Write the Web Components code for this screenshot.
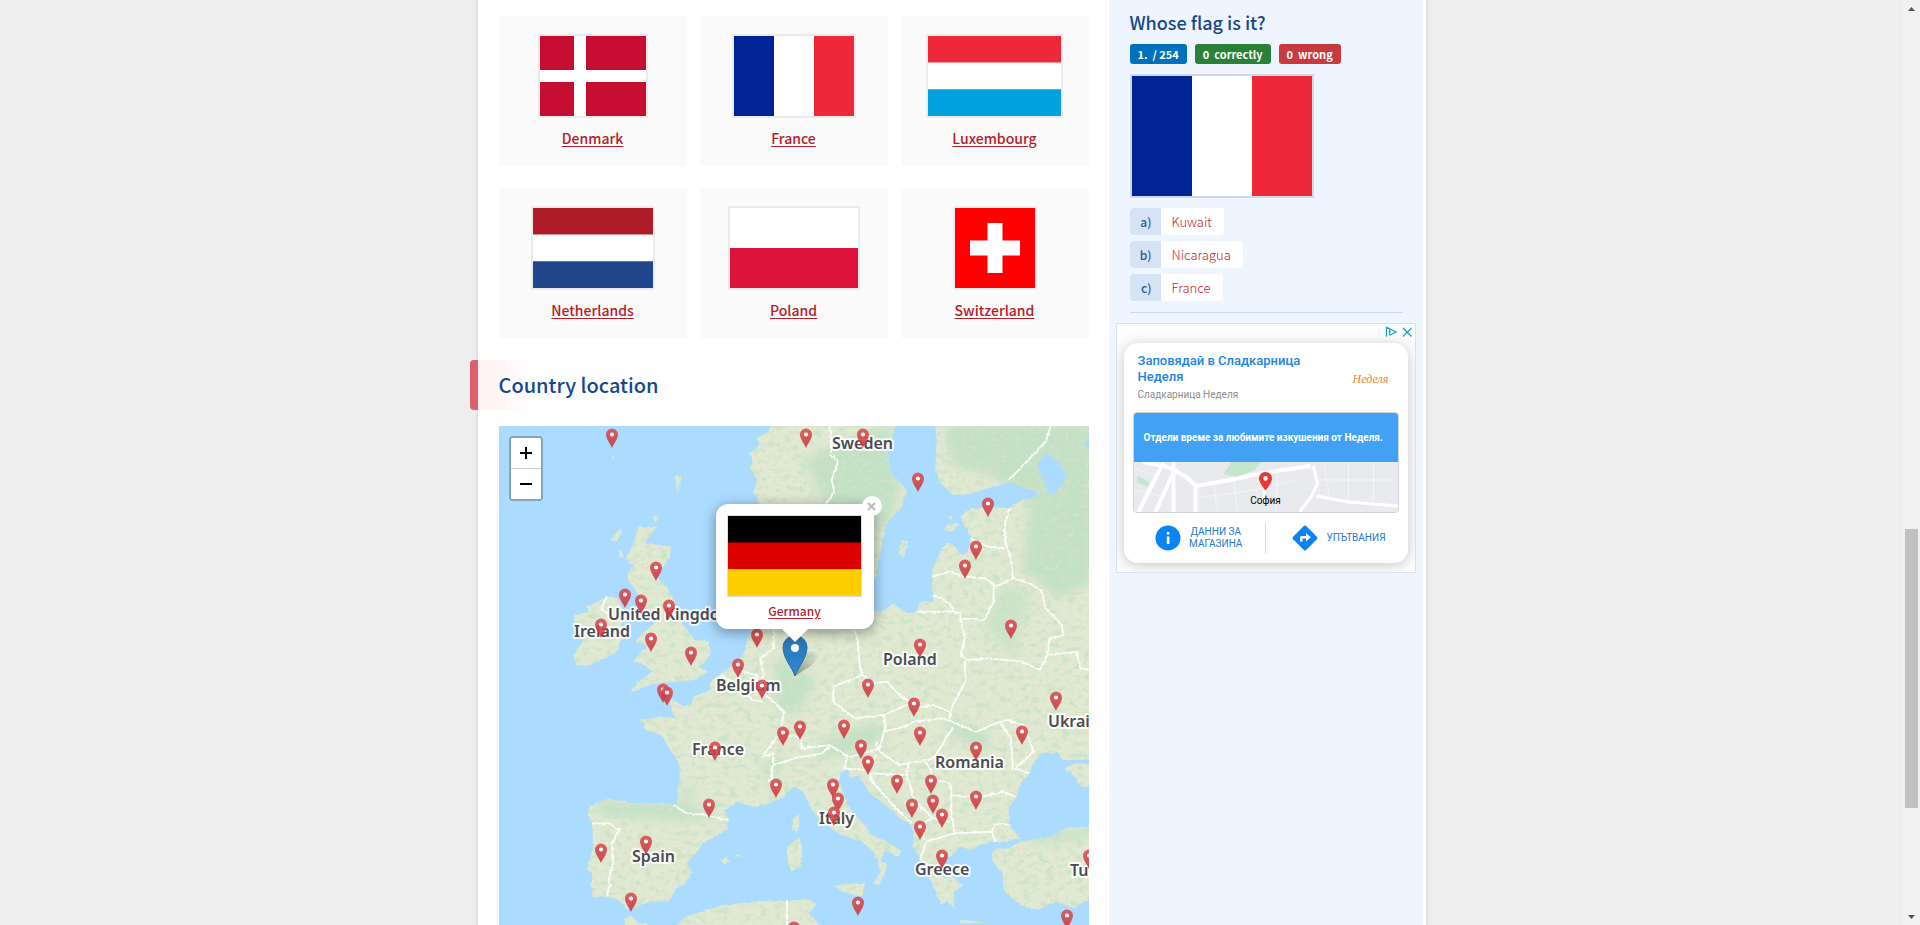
<!DOCTYPE html>
<html lang="en">
<head>
<meta charset="utf-8">
<meta name="viewport" content="width=device-width, initial-scale=1">
<title>Germany - Country location</title>
<style>
html,body{margin:0;height:100%}
body{background:#eee;font-family:"Noto Sans CJK SC","Open Sans",sans-serif;color:#15488a;overflow:hidden}
</style>
</head>
<body>
<site-page>
  <flag-grid>
    <flag-card country="denmark" label="Denmark"></flag-card>
    <flag-card country="france" label="France"></flag-card>
    <flag-card country="luxembourg" label="Luxembourg"></flag-card>
    <flag-card country="netherlands" label="Netherlands"></flag-card>
    <flag-card country="poland" label="Poland"></flag-card>
    <flag-card country="switzerland" label="Switzerland"></flag-card>
  </flag-grid>
  <section-heading>Country location</section-heading>
  <country-map></country-map>
  <flag-quiz slot="aside">
    <score-badge slot="score" tone="blue">1.&nbsp; / 254</score-badge>
    <score-badge slot="score" tone="green">0&nbsp; correctly</score-badge>
    <score-badge slot="score" tone="red">0&nbsp; wrong</score-badge>
    <answer-option mark="a)">Kuwait</answer-option>
    <answer-option mark="b)">Nicaragua</answer-option>
    <answer-option mark="c)">France</answer-option>
  </flag-quiz>
  <store-ad slot="aside"></store-ad>
</site-page>

<script>
function define(name, html, setup) {
  customElements.define(name, class extends HTMLElement {
    constructor() {
      super();
      const t = document.createElement('template');
      t.innerHTML = html;
      this.attachShadow({mode: 'open'}).append(t.content.cloneNode(true));
    }
    connectedCallback() { if (setup) setup(this, this.shadowRoot); }
  });
}

/* Flags: width, height and shapes */
const FLAGS = {
  denmark: [106, 80, '<path fill="#c60c30" d="M0 0h106v80H0z"/><path fill="#fff" d="M34 0h12v80H34zM0 34h106v12H0z"/>'],
  france: [120, 80, '<path fill="#002395" d="M0 0h40v80H0z"/><path fill="#fff" d="M40 0h40v80H40z"/><path fill="#ed2939" d="M80 0h40v80H80z"/>'],
  luxembourg: [133, 80, '<path fill="#ed2939" d="M0 0h133v27H0z"/><path fill="#fff" d="M0 26.6h133v27H0z"/><path fill="#00a1de" d="M0 53.3h133v27H0z"/>'],
  netherlands: [120, 80, '<path fill="#ae1c28" d="M0 0h120v27H0z"/><path fill="#fff" d="M0 26.6h120v27H0z"/><path fill="#21468b" d="M0 53.3h120v27H0z"/>'],
  poland: [128, 80, '<path fill="#fff" d="M0 0h128v40H0z"/><path fill="#dc143c" d="M0 40h128v40H0z"/>'],
  switzerland: [80, 80, '<path fill="#f00" d="M0 0h80v80H0z"/><path fill="#fff" d="M32.5 15h15v17.500H65v15H47.500V65h-15V47.500H15v-15h17.500z"/>'],
  germany: [133, 80, '<path d="M0 0h133v27H0z"/><path fill="#d00" d="M0 26.600h133v27H0z"/><path fill="#ffce00" d="M0 53.300h133v27H0z"/>']
};

define('country-flag', `<style>
:host{display:block}
svg{display:block;height:var(--flag-height,80px);width:auto;border:var(--flag-border,2px) solid var(--flag-line,#ebebeb)}
</style><svg role="img"></svg>`, (el, root) => {
  const [w, h, shapes] = FLAGS[el.getAttribute('country')];
  const svg = root.querySelector('svg');
  svg.setAttribute('viewBox', `0 0 ${w} ${h}`);
  svg.setAttribute('aria-label', 'Flag');
  svg.innerHTML = shapes;
});

define('flag-grid', `<style>
:host{display:grid;grid-template-columns:repeat(3,1fr);gap:22px 13px}
</style><slot></slot>`);

define('flag-card', `<style>
:host{display:flex;flex-direction:column;align-items:center;gap:8px;padding:18px 0 16px;background:#fafafa}
a{color:#b5202a;font-size:14px;font-weight:500;line-height:24px;text-underline-offset:2px}
</style><a href="#"></a>`, (el, root) => {
  const f = document.createElement('country-flag');
  f.setAttribute('country', el.getAttribute('country'));
  const a = root.querySelector('a');
  a.before(f);
  a.textContent = el.getAttribute('label');
});

define('section-heading', `<style>
:host{display:block;margin:22px 0 16px -29px;border-left:8px solid #dc5f6e;border-radius:4px 0 0 4px;background:linear-gradient(90deg,#fff1f1,#fff 60px)}
h2{margin:0;padding-left:21px;font-size:20px;font-weight:500;line-height:50px;color:#15488a}
</style><h2><slot></slot></h2>`);

define('scroll-rail', `<style>
:host{display:grid;grid-template-rows:17px 512fr 279fr 100fr 17px;justify-items:center;align-items:center;background:#f1f1f1}
i{grid-row:3;width:13px;height:100%;background:#c1c1c1}
svg{display:block;width:7px;height:4px}
svg.d{grid-row:5}
</style><svg viewBox="0 0 7 4"><path d="M0 4 3.5 0 7 4z" fill="#505050"/></svg><i></i><svg class="d" viewBox="0 0 7 4"><path d="M0 0h7L3.500 4z" fill="#505050"/></svg>`);

define('site-page', `<style>
:host{display:grid;grid-template-columns:1fr 17px;height:100vh;overflow:hidden}
.view{overflow:hidden}
.shell{box-sizing:border-box;width:100%;max-width:948px;min-height:100%;margin:0 auto;display:grid;grid-template-columns:1fr 314px;background:#fff;border-right:3px solid #fff;box-shadow:0 0 4px #ccc}
main{min-width:0;padding:16px 20px 16px 21px}
aside{background:#eff5ff}
</style><div class="view"><div class="shell"><main><slot></slot></main><aside><slot name="aside"></slot></aside></div></div><scroll-rail></scroll-rail>`);

define('score-badge', `<style>
:host{display:block;padding:0 8px;border-radius:3px;background:#0071bc;color:#fff;font-size:11px;font-weight:700;line-height:20px;white-space:pre}
:host([tone=green]){background:#2a8037}
:host([tone=red]){background:#c93a40}
</style><slot></slot>`);

define('answer-option', `<style>
:host{display:flex;border-radius:4px;overflow:hidden;background:#fff;line-height:27px}
b{width:31px;box-sizing:border-box;padding-right:9px;text-align:right;background:#d6e2f5;color:#2d5a93;font-size:12px;font-weight:500}
a{padding:0 12px 0 11px;font-size:13px;font-weight:300;color:#c0262e;text-decoration:none}
</style><b></b><a href="#"><slot></slot></a>`, (el, root) => {
  root.querySelector('b').textContent = el.getAttribute('mark');
});

define('flag-quiz', `<style>
:host{display:block;margin:0 20px 10px 21px;padding:8px 0 11px;border-bottom:1px solid #cdd8ea}
h3{margin:0 0 8px;font-size:18px;font-weight:500;line-height:28px}
.score{display:flex;gap:8px;margin-bottom:10px}
country-flag{--flag-height:120px;--flag-line:#cddaeb}
.answers{display:flex;flex-direction:column;align-items:flex-start;gap:6px;margin-top:10px}
</style><h3>Whose flag is it?</h3><div class="score"><slot name="score"></slot></div><country-flag country="france"></country-flag><div class="answers"><slot></slot></div>`);

define('store-ad', `<style>
:host{display:block;box-sizing:border-box;margin:0 7px;padding:19px 7px 9px;position:relative;background:#fdfdfd;border:1px solid #dbe1ea;overflow:hidden;font-family:Roboto,"Open Sans",sans-serif}
.choices{position:absolute;right:2px;top:2px;display:flex;gap:4px}
.choices svg{width:12px;height:12px;display:block}
.card{background:#fff;border-radius:14px;box-shadow:0 2px 14px rgba(0,0,0,.22);padding:10px 9px 10px 9px}
.head{display:grid;grid-template-columns:1fr 46px;column-gap:36px;align-items:center;padding-left:5px}
h4{margin:0;font-size:13px;font-weight:500;line-height:16px;color:#1a84e6;white-space:nowrap}
p{margin:0;font-size:10px;line-height:20px;color:#8c8c8c}
.logo{font:italic 400 12px/12px "Liberation Serif",serif;color:#f08130}
.promo{margin-top:7px;border:1px solid #d0d4d8;border-radius:4px;overflow:hidden}
.promo b{display:block;padding-left:10px;background:#42a1f3;color:#fff;font-size:10px;font-weight:700;line-height:49px;white-space:nowrap}
.town{position:relative;height:50px;background:#e8eaed}
.town svg{display:block;width:100%;height:100%}
.town span{position:absolute;left:0;right:0;bottom:4px;text-align:center;font-size:10px;line-height:14px;color:#000}
.acts{display:grid;grid-template-columns:1fr 1px 1fr;align-items:center;margin-top:10px}
.acts i{height:30px;background:#dcdcdc}
.acts a{display:flex;align-items:center;justify-content:center;gap:8px;color:#2578cf;font-size:10px;line-height:12px;text-align:center;text-decoration:none}
.acts i+a{justify-content:flex-end;padding-right:13px}
.acts svg{width:26px;height:26px;flex:none}
</style>
<div class="choices"><svg viewBox="0 0 12 12" fill="none" stroke="#18a9b8" stroke-width="1.200"><path d="M1.500 10.800V1.200L11 6 4.500 9.300M4.500 3.200v6M4.500 5.300l1.500.700"/></svg><svg viewBox="0 0 12 12" fill="none" stroke="#18a9b8" stroke-width="1.400"><path d="M2 2l8.500 8.500M10.500 2 2 10.500"/></svg></div>
<div class="card">
<div class="head"><div><h4>Заповядай в Сладкарница<br>Неделя</h4><p>Сладкарница Неделя</p></div><span class="logo">Неделя</span></div>
<div class="promo"><b>Отдели време за любимите изкушения от Неделя.</b>
<div class="town"><svg viewBox="0 0 265 50" preserveAspectRatio="xMidYMid slice">
<path fill="#c3e6cd" d="M98 0h30l-7 8-18 7-13-3zM4 14l12 6-2 5-11-5z"/>
<g fill="none" stroke="#fff"><path stroke-width="4" d="M10 0l24 5 19 10 9 9 35-6 32-7 48-7M62 24v26M40 0v50M30 0 5 50M42 6 22 50"/><path stroke-width="3" d="M180 4l4 18-7 14-11 14M183 34l32 6 50 4M132 20l-2 20"/><path stroke-width="1" opacity=".5" d="M62 36l60-8 40-10M80 20l4 30M100 16l4 34M144 12l-2 38M190 0l6 35M215 0v40M240 0v44M184 18h80M0 28l28 6M0 6l24 8"/></g>
<path fill="#e53935" d="M132 10c-3.600 0-6.500 2.800-6.500 6.400 0 4.600 6.500 12 6.500 12s6.500-7.400 6.500-12c0-3.600-2.900-6.400-6.500-6.400z"/><circle cx="132" cy="16.400" r="2.300" fill="#fff"/></svg><span>София</span></div></div>
<div class="acts"><a href="#"><svg viewBox="0 0 26 26"><circle cx="13" cy="13" r="12.500" fill="#0a84f5"/><path fill="#fff" d="M11.800 7h2.600v2.600h-2.600zM11.800 11.500h2.600V19h-2.600z"/></svg><span>ДАННИ ЗА<br>МАГАЗИНА</span></a><i></i><a href="#"><svg viewBox="0 0 26 26"><path fill="#0a84f5" d="M11.800 1.100q1.200-1.100 2.400 0l10.700 10.700q1.100 1.200 0 2.400L14.200 24.900q-1.200 1.100-2.400 0L1.100 14.200q-1.100-1.200 0-2.400z"/><path fill="#fff" d="M8 16.500v-4q0-1.500 1.500-1.500H14V8l4.800 4.200L14 16.500v-3h-3.500v3z"/></svg><span>УПЪТВАНИЯ</span></a></div>
</div>`);

/* The map drawing uses its own grid: 2.592 units across and 3 units down per pixel. */
const toX = u => Math.round((u - 23) / 2.592), toY = u => Math.round((u - 3) / 3);
const PINS = [[316,68],[818,68],[966,68],[1109,200],[1290,275],[1259,404],[1231,463],[1350,641],[1114,698],[430,467],[349,550],[391,567],[463,583],[287,640],[417,681],[521,724],[448,834],[458,844],[692,670],[642,760],[704,821],[979,820],[1098,875],[1467,859],[759,962],[803,946],[917,943],[961,1003],[979,1051],[1114,963],[1259,1009],[1379,961],[583,1009],[741,1120],[567,1178],[889,1118],[901,1162],[891,1204],[1054,1106],[1143,1106],[1094,1178],[1148,1166],[1171,1208],[1259,1154],[1114,1245],[1171,1333],[287,1313],[404,1291],[365,1460],[953,1472],[1495,1512],[788,1548],[1551,1333]];
const LABELS = [['Sweden',885,71],['United Kingdom',305,584],['Ireland',217,636],['Poland',1018,720],['Belgium',585,798],['France',523,990],['Romania',1153,1029],['Ukrai',1446,906],['Italy',852,1196],['Greece',1100,1349],['Spain',367,1312],['Tu',1502,1352]];

define('country-map', `<style>
:host{display:block;position:relative;height:600px;overflow:hidden;background:#abdcff}
.land{position:absolute;left:0;top:0;width:100%;height:100%}
.zoom{position:absolute;left:10px;top:10px;border:2px solid rgba(0,0,0,.25);border-radius:4px;background-clip:padding-box;display:grid}
.zoom button{width:30px;height:30px;padding:0;border:0;background:#fff;display:grid;place-items:center}
.zoom button:first-child{height:31px;border-bottom:1px solid #ccc;border-radius:2px 2px 0 0}
.zoom svg{width:14px;height:14px}
.popup{position:absolute;left:217px;top:78px;width:158px;box-sizing:border-box;padding:11px 0 8px;background:#fff;border-radius:12px;box-shadow:0 3px 14px rgba(0,0,0,.4);display:flex;flex-direction:column;align-items:center;gap:4px;--flag-border:1px;--flag-line:#ddd}
.popup a{font-size:12px;font-weight:500;line-height:20px;color:#b5202a;text-underline-offset:2px}
.popup button{position:absolute;right:-8px;top:-8px;width:20px;height:20px;padding:0;border:0;border-radius:50%;background:#fff;display:grid;place-items:center}
.popup button svg{width:9px;height:9px}
.tip{position:absolute;left:50%;top:100%;margin-left:-13px;width:26px;height:13px;display:block}
</style>
<svg class="land" role="img" aria-label="Map of Europe">
<defs>
<filter id="rough" x="0" y="0" width="1" height="1"><feTurbulence type="fractalNoise" baseFrequency=".09" numOctaves="3" seed="4"/><feDisplacementMap in="SourceGraphic" scale="9" xChannelSelector="R" yChannelSelector="G"/></filter>
<filter id="wood" x="0" y="0" width="1" height="1" color-interpolation-filters="sRGB"><feTurbulence type="fractalNoise" baseFrequency=".05 .06" numOctaves="5" seed="11"/><feColorMatrix values="0 0 0 0 .77 0 0 0 0 .89 0 0 0 0 .78 5 0 0 0 -2.600"/><feComposite in2="SourceGraphic" operator="in"/></filter>
<filter id="field" x="0" y="0" width="1" height="1" color-interpolation-filters="sRGB"><feTurbulence type="fractalNoise" baseFrequency=".08" numOctaves="3" seed="3"/><feColorMatrix values="0 0 0 0 .89 0 0 0 0 .87 0 0 0 0 .81 0 7 0 0 -4"/><feComposite in2="SourceGraphic" operator="in"/></filter>
<filter id="soft"><feGaussianBlur stdDeviation="14"/></filter>
<linearGradient id="red" x2="0" y2="1"><stop stop-color="#dc4c52"/><stop offset="1" stop-color="#c8333c"/></linearGradient>
<linearGradient id="blue" x2="0" y2="1"><stop stop-color="#2b72b0"/><stop offset="1" stop-color="#2e8bd8"/></linearGradient>
<linearGradient id="shade" x1="0" y1="1" x2="1" y2="0"><stop stop-color="#000" stop-opacity=".55"/><stop offset="1" stop-color="#000" stop-opacity="0"/></linearGradient>
<g id="pin"><path d="M0 0C-1.500-4-6-9-6-13.500a6 6 0 0 1 12 0C6-9 1.500-4 0 0z" fill="url(#red)" fill-opacity=".88"/><circle cy="-13.500" r="2.100" fill="#fff"/></g>
<path id="shape" d="
M735-20 720 20 690 40 698 60 672 85 682 105 675 130 692 165 683 200 700 240 720 300 800 300 860 400 900 480 1000 460 1011 385 1028 295 1067 245 1080 195 1037 145 1030 75 1042 45 1054-20z
M1151-20 1158 45 1154 135 1166 175 1201 210 1240 207 1290 190 1348 172 1390 190 1425 200 1408 220 1375 225 1348 250 1305 247 1244 253 1218 275 1236 315 1246 335 1240 375 1222 390 1205 365 1186 352 1166 380 1149 425 1145 485 1149 530 1115 532 1106 560 1080 565 1045 537 1011 560 960 560 900 540 800 580 740 600 700 605 680 615 668 640 657 685 640 710 600 745 570 770 570 795 527 815 523 835 501 845 480 828 465 815 471 860 484 880 441 875 384 885 402 895 397 910 449 935 458 960 488 1010 492 1045 484 1135 475 1140 432 1135 371 1135 302 1122 259 1145 254 1165 264 1195 268 1265 250 1335 264 1345 264 1415 302 1415 333 1425 354 1455 372 1450 415 1430 462 1430 484 1390 501 1380 522 1345 510 1315 553 1255 613 1215 618 1185 609 1155 639 1130 682 1145 717 1140 760 1115 786 1085 812 1100 829 1145 855 1185 890 1215 924 1235 963 1250 994 1280 1007 1315 1011 1345 994 1375 1007 1380 1024 1345 1028 1325 1015 1305 1020 1275 1058 1295 1067 1280 1028 1250 985 1225 968 1195 950 1175 924 1135 907 1075 907 1045 930 1030 933 1060 955 1050 968 1075 985 1105 1028 1145 1063 1180 1097 1205 1097 1265 1115 1305 1132 1345 1192 1360 1171 1305 1192 1295 1218 1265 1244 1275 1270 1260 1300 1250 1330 1250 1374 1240 1344 1200 1344 1145 1365 1115 1374 1075 1395 1050 1408 1015 1430 985 1469 980 1485 1005 1580 1003 1580-20z
M1135 1350 1190 1350 1227 1382 1201 1400 1204 1450 1185 1430 1168 1435 1150 1385z
M1486 1030 1521 1015 1580 1020 1580 1085 1530 1085 1512 1050z
M1580 1205 1495 1208 1451 1235 1374 1250 1345 1270 1305 1275 1300 1305 1326 1345 1331 1395 1374 1440 1417 1455 1469 1430 1512 1450 1580 1405z
M894 1380 972 1375 965 1415 945 1412 903 1395z
M770 1265 800 1240 810 1270 803 1325 780 1340 772 1310z
M785 1182 800 1168 802 1200 793 1222 782 1205z
M440 1580 490 1490 520 1470 600 1442 700 1428 760 1430 830 1422 845 1440 825 1465 850 1490 850 1580z
M345 1580 348 1480 365 1472 380 1490 440 1510 440 1580z
M385 305 432 305 400 355 468 365 465 400 440 435 425 455 455 480 475 520 485 570 500 600 530 645 565 648 574 680 555 715 540 725 565 740 530 765 480 770 430 775 400 785 362 803 385 770 420 740 400 720 372 708 410 660 375 650 400 620 430 590 400 560 395 520 380 500 360 470 355 450 370 420 352 400 370 360z
M300 515 330 520 345 555 340 590 340 640 330 680 260 720 225 722 215 690 240 650 250 620 215 590 220 570 255 560 250 545 280 530z
M335 310 342 325 325 350 313 345z M335 370 347 395 335 398z M480 150 497 155 484 205z M420 270 440 275 430 290z M1067 345 1085 350 1068 400 1060 380z M318 85 324 110 317 90z M597 1307 612 1297 622 1308 610 1320z M635 1290 645 1290 645 1297z M1185 300 1220 295 1195 320 1175 315z M1185 275 1200 275 1195 287z M1215 1484 1290 1494 1220 1494z"/>
<clipPath id="onland"><use href="#shape"/></clipPath>
</defs>
<g transform="scale(.3858 .3333) translate(-23 -3)">
<g filter="url(#rough)"><use href="#shape" fill="#e0e9d1"/></g>
<g clip-path="url(#onland)">
<g fill="#c3e1c5" filter="url(#soft)"><path d="M820 100 900 60 1040 0 1060 180 1040 300 900 300 850 200z"/><path d="M1180 0 1560 0 1560 470 1470 520 1380 430 1400 240 1300 150 1200 120z"/><path d="M860 950 1000 890 1030 940 960 980 840 1000z"/><path d="M1170 880 1290 920 1290 980 1200 930z"/><path d="M270 1130 480 1130 600 1180 500 1185 290 1170z"/><path d="M740 690 840 760 800 870 740 850z"/><path d="M490 1060 540 1120 500 1140z M700 1020 760 980 730 1110z" opacity=".7"/><path d="M1380 1230 1560 1205 1560 1240 1400 1260z M970 1070 1080 1150 1130 1220 1080 1180z M1400 500 1330 480 1280 600 1360 700z" opacity=".7"/></g>
<rect x="0" y="-20" width="1600" height="1620" filter="url(#wood)" opacity=".7"/>
<rect x="0" y="-20" width="1600" height="1620" filter="url(#field)" opacity=".6"/>
</g>
<path filter="url(#rough)" fill="#abdcff" d="M1417 115 1443 88 1475 115 1491 145 1486 175 1460 208 1445 200 1434 165z M1553 30v50l-12-25z M1240 380 1222 388 1205 365 1228 355z"/>
<g filter="url(#rough)" fill="none" stroke="#fff" stroke-opacity=".9" stroke-linejoin="round"><path stroke-width="5" d="
M881 3 884 90 902 110 885 165 892 200 870 240 M1456-10 1440 50 1345 165 M1348 250 1335 290 1335 350 1350 400 1355 460 1310 485 1285 460 1230 455 1190 440 1147 455
M1244 340 1290 365 1335 370 M1355 460 1400 475 1430 500 1440 550 1482 600 1485 630 1450 640 1445 690 1425 735 1380 710 1290 700 1235 705 1220 690 1230 640 1220 580 1280 585 1305 530 1305 485
M1145 510 1170 520 1195 540 1200 560 1106 560 M1195 560 1218 565 1220 590 M1450 690 1520 680 1530 730 1560 735 M1230 705 1232 770 1195 850 1190 880 M940 600 952 640 958 720 965 750 890 785 890 830 945 880 1020 870 1080 840 1100 850 1150 840 1190 860 M965 750 1000 775 1030 770 1060 810 1100 840
M1020 870 1025 900 1010 970 940 995 920 990 880 960 810 970 800 935 750 930 M1020 920 1060 910 1100 890 1175 880 1260 920 1310 895 1340 885 1380 900 1410 980 1360 1030 1395 1045
M1200 905 1150 1000 1060 1020 1010 980 1000 950 M1320 890 1350 940 1355 1040 M1130 1010 1145 1040 1140 1060 1190 1075 1195 1110 1260 1120 1330 1100 1362 1115 M1195 1110 1195 1160 1205 1225 1300 1220 1310 1195 1350 1200 M1205 1225 1130 1250 1115 1305 M985 1045 1080 1050 1090 1090 1100 1130 1150 1180 1190 1190 M985 1045 990 1070 1060 1160 1095 1195 M1085 1010 1080 1050 M925 995 920 1030 980 1035 1000 990 M1125 1240 1120 1195 1145 1180 M1300 1220 1310 1250
M735 610 735 670 700 700 710 750 690 790 730 825 760 860 755 920 705 995 M597 750 630 770 680 825 710 830 M640 735 690 750 700 800 M705 995 735 985 730 1060 720 1070 M735 1020 790 1000 860 985 880 965
M475 1140 510 1165 560 1170 615 1185 M264 1195 310 1195 335 1215 315 1260 320 1310 308 1360 310 1380 302 1415 M303 515 288 550 310 570 M770 1425 768 1600"/></g>
</g>
<g class="marks"></g>
</svg>
<div class="zoom"><button aria-label="Zoom in"><svg viewBox="0 0 14 14"><path d="M1 7h12M7 1v12" stroke="#000" stroke-width="2"/></svg></button><button aria-label="Zoom out"><svg viewBox="0 0 14 14"><path d="M1 7h12" stroke="#000" stroke-width="2"/></svg></button></div>
<div class="popup"><country-flag country="germany"></country-flag><a href="#">Germany</a><svg class="tip" viewBox="0 0 26 13"><path d="M0 0h26L13 13z" fill="#fff"/></svg><button aria-label="Close"><svg viewBox="0 0 9 9"><path d="M1 1l7 7M8 1 1 8" stroke="#bbb" stroke-width="2"/></svg></button></div>`, (el, root) => {
  const text = LABELS.map(([t, x, y]) => `<text x="${toX(x)}" y="${toY(y)}">${t}</text>`).join('');
  const pins = PINS.map(([x, y]) => `<use href="#pin" x="${toX(x)}" y="${toY(y)}"/>`).join('');
  root.querySelector('.marks').innerHTML =
    `<g font-family="'Noto Sans',sans-serif" font-size="16" font-weight="600" fill="#4c4c4f" stroke="#fff" stroke-opacity=".85" stroke-width="4" stroke-linejoin="round" paint-order="stroke">${text}</g>${pins}` +
    `<g transform="translate(296 250)"><path d="M0 0 8-22q10-5 16-1 1 5-10 14z" fill="url(#shade)" opacity=".6"/><path d="M0 0C-3-9-12-18-12-28.500a12 12 0 0 1 24 0C12-18 3-9 0 0z" fill="url(#blue)" stroke="#2a6ba6"/><circle cy="-28" r="4" fill="#fff"/></g>`;
});
</script>
</body>
</html>
